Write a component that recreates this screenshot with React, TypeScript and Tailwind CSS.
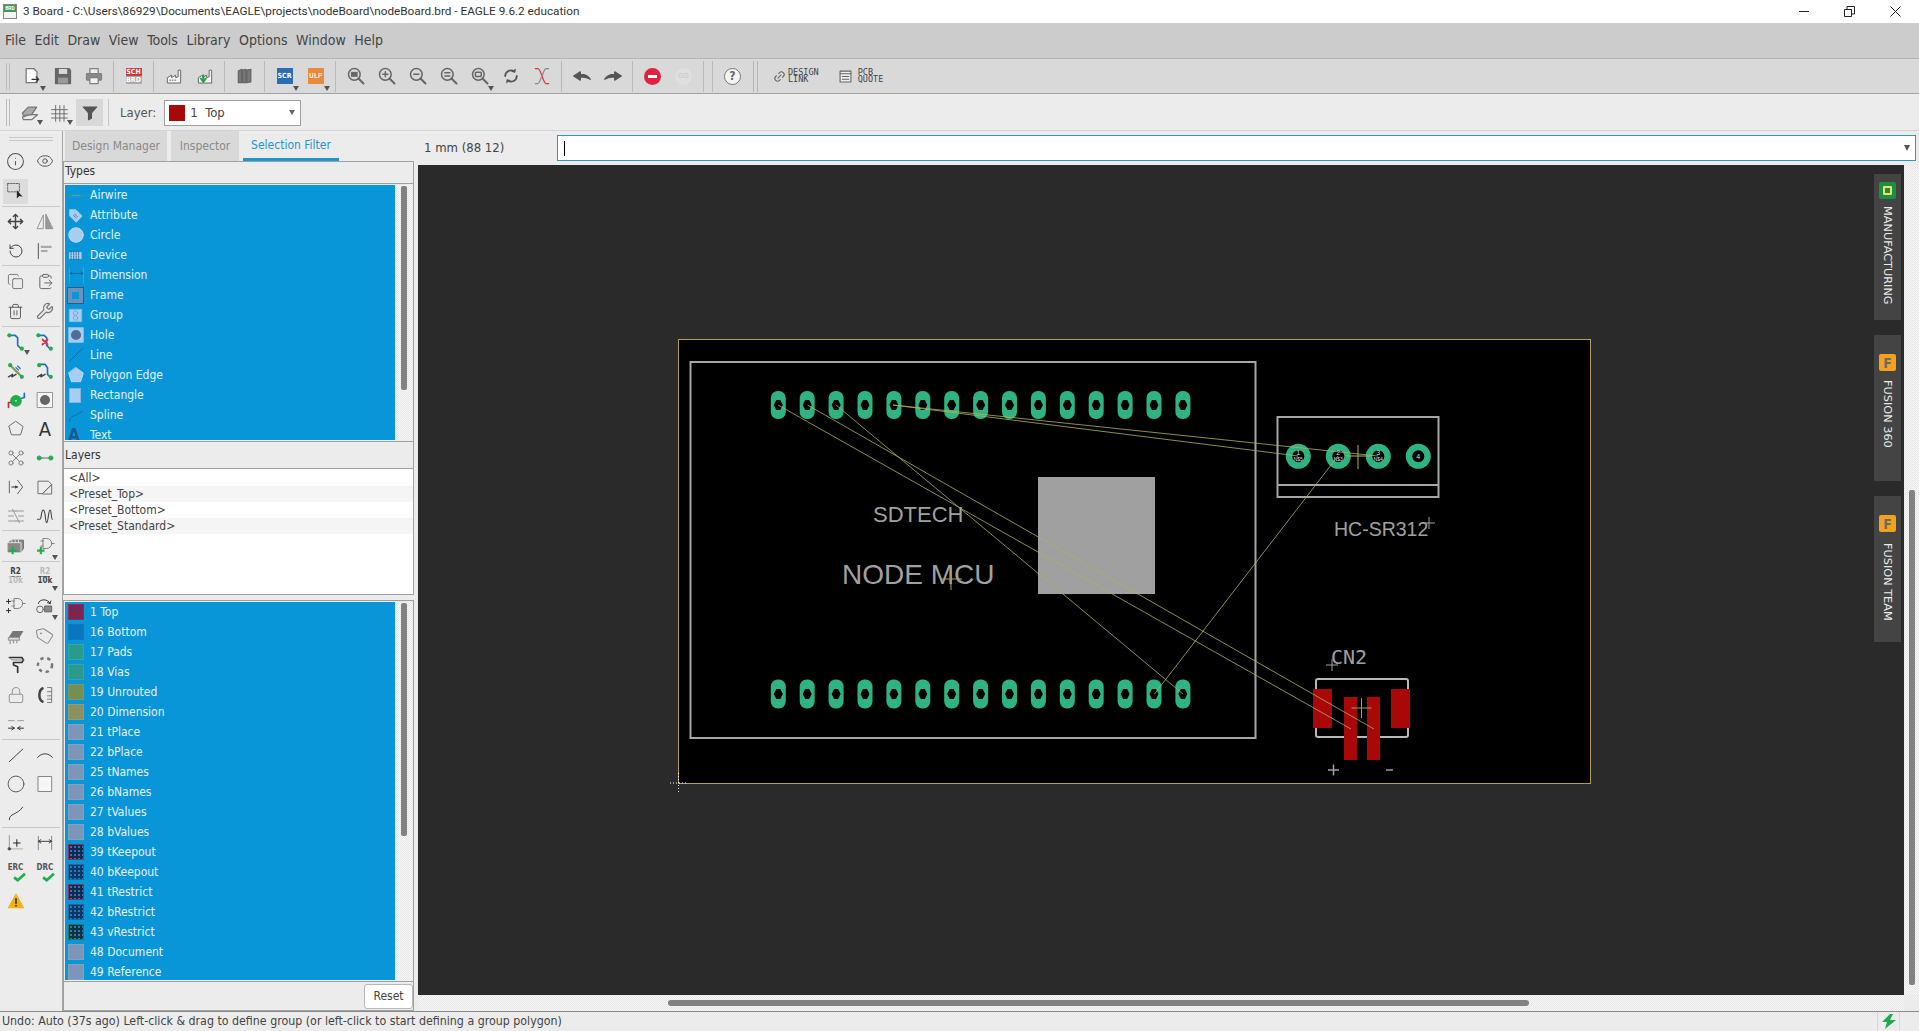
import React from "react";
import {
  ClipboardPaste,
  Copy,
  Eye,
  Info,
  Link2,
  Lock,
  Move,
  RotateCcw,
  Tag,
  Trash2,
  Wrench,
} from "lucide-react";

const TYPE_ROWS = [
  "Airwire",
  "Attribute",
  "Circle",
  "Device",
  "Dimension",
  "Frame",
  "Group",
  "Hole",
  "Line",
  "Polygon Edge",
  "Rectangle",
  "Spline",
  "Text",
];

const PRESETS = ["<All>", "<Preset_Top>", "<Preset_Bottom>", "<Preset_Standard>"];

const LAYER_ROWS = [
  { name: "1 Top", swatch: "bg-[#7a2650] border-[#8f2c58]" },
  { name: "16 Bottom", swatch: "bg-[#0a74bd] border-[#0a7cc6]" },
  { name: "17 Pads", swatch: "bg-[#2a9a8c] border-[#38a898]" },
  { name: "18 Vias", swatch: "bg-[#2a9a8c] border-[#38a898]" },
  { name: "19 Unrouted", swatch: "bg-[#748f52] border-[#7f9a5c]" },
  { name: "20 Dimension", swatch: "bg-[#8a9060] border-[#969c6c]" },
  { name: "21 tPlace", swatch: "bg-[#7b96b8] border-[#86a0c0]" },
  { name: "22 bPlace", swatch: "bg-[#7b96b8] border-[#86a0c0]" },
  { name: "25 tNames", swatch: "bg-[#7b96b8] border-[#86a0c0]" },
  { name: "26 bNames", swatch: "bg-[#7b96b8] border-[#86a0c0]" },
  { name: "27 tValues", swatch: "bg-[#7b96b8] border-[#86a0c0]" },
  { name: "28 bValues", swatch: "bg-[#7b96b8] border-[#86a0c0]" },
  { name: "39 tKeepout", swatch: "bg-[#0c2a52] border-[#8f2c58]", dotted: true },
  { name: "40 bKeepout", swatch: "bg-[#04376b] border-[#0a6cb0]", dotted: true },
  { name: "41 tRestrict", swatch: "bg-[#0c2a52] border-[#8f2c58]", dotted: true },
  { name: "42 bRestrict", swatch: "bg-[#04376b] border-[#0a6cb0]", dotted: true },
  { name: "43 vRestrict", swatch: "bg-[#0b3346] border-[#1f7a60]", dotted: true },
  { name: "48 Document", swatch: "bg-[#7b96b8] border-[#86a0c0]" },
  { name: "49 Reference", swatch: "bg-[#7b96b8] border-[#86a0c0]" },
];

const DITHER =
  "bg-[repeating-conic-gradient(#e6e6e6_0%_25%,#f8f8f8_0%_50%)] bg-[length:2px_2px]";

function Ic({
  children,
  size = 20,
  c = "#5a5a5a",
  w = 1.5,
}: {
  children: React.ReactNode;
  size?: number;
  c?: string;
  w?: number;
}) {
  return (
    <svg
      width={size}
      height={size}
      viewBox="0 0 24 24"
      fill="none"
      stroke={c}
      strokeWidth={w}
      strokeLinecap="round"
      strokeLinejoin="round"
    >
      {children}
    </svg>
  );
}

function Drop() {
  return (
    <span className="absolute right-[1px] bottom-[1px] h-0 w-0 border-x-[3.5px] border-t-[5px] border-x-transparent border-t-[#555]" />
  );
}

function Magnifier({ children }: { children?: React.ReactNode }) {
  return (
    <Ic c="#666" w={1.8}>
      <circle cx="10" cy="10" r="7" />
      <path d="M15 15l6 6" strokeWidth={2.4} />
      {children}
    </Ic>
  );
}

function ToolbarOne() {
  return (
    <div className="flex h-[35px] items-center border-b border-[#a2a2a2] bg-[#d9d9d9]">
      <Handle />
      <Tb drop>
        <Ic c="#777">
          <path d="M5 3h9l4 4v13H5z" fill="#fafafa" />
          <path d="M12 16h8m-3-3l3 3-3 3" stroke="#333" />
        </Ic>
      </Tb>
      <Tb>
        <Ic c="#666">
          <path d="M3 3h16l2 2v16H3z" fill="#666" />
          <rect x="7" y="3.5" width="10" height="6" fill="#d9d9d9" stroke="none" />
          <rect x="6" y="14" width="12" height="7" fill="#999" stroke="none" />
        </Ic>
      </Tb>
      <Tb>
        <Ic c="#808080">
          <rect x="7" y="3" width="10" height="6" fill="#eee" />
          <rect x="3" y="9" width="18" height="8" rx="1" fill="#8a8a8a" />
          <rect x="7" y="14" width="10" height="7" fill="#f2f2f2" />
        </Ic>
      </Tb>
      <TbSep />
      <Tb>
        <div className="flex h-[16px] w-[16px] flex-col text-center text-[7px] leading-[8px] font-bold text-white">
          <span className="bg-[#d03a3a]">SCH</span>
          <span className="bg-[#aaa]">BRD</span>
        </div>
      </Tb>
      <TbSep />
      <Tb>
        <Factory />
      </Tb>
      <Tb>
        <Factory arrow />
      </Tb>
      <TbSep />
      <Tb>
        <Ic c="#666">
          <path d="M4 6l4-2v16H4zM9 5l4-1v16H9zM14 5l5-1v15l-5 1z" fill="#777" />
        </Ic>
      </Tb>
      <TbSep />
      <Tb drop>
        <span className="flex h-[16px] w-[16px] items-center justify-center bg-[#2b6db5] text-[7px] font-bold text-white">
          SCR
        </span>
      </Tb>
      <Tb drop>
        <span className="flex h-[16px] w-[16px] items-center justify-center bg-[#e8893c] text-[7px] font-bold text-[#fde3c8]">
          ULP
        </span>
      </Tb>
      <TbSep />
      <Tb>
        <Magnifier>
          <rect x="6" y="7" width="8" height="6" fill="#666" stroke="none" />
        </Magnifier>
      </Tb>
      <Tb>
        <Magnifier>
          <path d="M7 10h6M10 7v6" />
        </Magnifier>
      </Tb>
      <Tb>
        <Magnifier>
          <path d="M7 10h6" />
        </Magnifier>
      </Tb>
      <Tb>
        <Magnifier>
          <path d="M7 8h6M7 12h6" />
        </Magnifier>
      </Tb>
      <Tb drop>
        <Magnifier>
          <rect x="6.5" y="7.5" width="7" height="5" rx="1" />
        </Magnifier>
      </Tb>
      <Tb>
        <Ic c="#555" w={2.2}>
          <path d="M5 12a7 7 0 0 1 11-5.5M19 12a7 7 0 0 1-11 5.5" />
          <path d="M18 3l-1 5-5-1zM6 21l1-5 5 1z" fill="#555" stroke="none" />
        </Ic>
      </Tb>
      <Tb>
        <Ic c="#d9363e" w={1.5}>
          <path d="M4 3h3c4 0 6 18 10 18h3" />
          <path d="M20 3h-3c-2 0-3 4-4.500 8M11 14c-1 3-2.500 7-4 7H4" stroke="#8a8a8a" />
        </Ic>
      </Tb>
      <TbSep />
      <Tb>
        <Ic c="#555">
          <path d="M2 12l8-5v3c5 0 9 1 12 6-4-2.500-8-3-12-2.500V17z" fill="#555" />
        </Ic>
      </Tb>
      <Tb>
        <Ic c="#555">
          <path d="M22 12l-8-5v3c-5 0-9 1-12 6 4-2.500 8-3 12-2.500V17z" fill="#555" />
        </Ic>
      </Tb>
      <TbSep />
      <Tb>
        <span className="flex h-[17px] w-[17px] items-center justify-center rounded-full bg-[#e0213f]">
          <span className="h-[3px] w-[9px] bg-white" />
        </span>
      </Tb>
      <Tb>
        <span className="flex h-[17px] w-[17px] items-center justify-center rounded-full bg-[#dfdfdf] text-[7px] font-bold text-[#cfcfcf]">
          GO
        </span>
      </Tb>
      <TbSep />
      <TbSep />
      <Tb>
        <span className="flex h-[17px] w-[17px] items-center justify-center rounded-full border border-[#777] bg-[#f4f4f4] text-[12px] font-bold text-[#666]">
          ?
        </span>
      </Tb>
      <span className="ml-[5px] h-[31px] w-px bg-[#b5b5b5]" />
      <span className="ml-[3px] h-[31px] w-px bg-[#b5b5b5]" />
      <span className="ml-[15px] flex items-center gap-[2px]">
        <Link2 size={13} color="#666" className="-rotate-45" />
        <LinkLabel top="DESIGN" bottom="LINK" />
      </span>
      <span className="ml-[20px] flex items-center gap-[6px]">
        <Ic size={13} c="#666" w={2}>
          <rect x="2" y="2" width="20" height="20" fill="#eee" />
          <path d="M2 7h20M6 12h12M6 17h12" />
        </Ic>
        <LinkLabel top="PCB" bottom="QUOTE" />
      </span>
    </div>
  );
}

function LinkLabel({ top, bottom }: { top: string; bottom: string }) {
  return (
    <span className="flex flex-col font-['DejaVu_Sans_Mono',monospace] text-[8.5px] leading-[7px] text-[#444]">
      <span>{top}</span>
      <span>{bottom}</span>
    </span>
  );
}

function Factory({ arrow }: { arrow?: boolean }) {
  return (
    <Ic c="#6a6a6a" w={1.2}>
      <path d="M4 20v-6l5-3v3l5-3v3l3-1V5h3v15z" fill="#f4f4f4" />
      {arrow ? (
        <path d="M10 11v6m-3-2l3 4 3-4" stroke="#22a84a" strokeWidth={2.4} />
      ) : (
        <path d="M7 17h1m2 0h1m2 0h1" />
      )}
    </Ic>
  );
}

function Handle() {
  return (
    <span className="flex w-[16px] justify-center gap-[2px]">
      <span className="h-[27px] w-px bg-[#bdbdbd]" />
      <span className="h-[27px] w-px bg-[#bdbdbd]" />
    </span>
  );
}

function Tb({ children, drop }: { children: React.ReactNode; drop?: boolean }) {
  return (
    <span className="relative flex h-[31px] w-[31px] items-center justify-center">
      {children}
      {drop ? <Drop /> : null}
    </span>
  );
}

function TbSep() {
  return (
    <span className="flex h-[31px] w-[9px] justify-center">
      <span className="h-full w-px bg-[#b9b9b9]" />
    </span>
  );
}

function ToolbarTwo() {
  return (
    <div className="flex h-[37px] items-center border-b border-[#d4d4d4] bg-[#ececec] pt-[1px]">
      <Handle />
      <span className="relative flex h-[27px] w-[28px] items-center justify-center">
        <Ic c="#777">
          <path d="M3 17l8-3 10 0-7 6H4z" fill="#ececec" />
          <path d="M3 12l7-7h10l-6 9-10 1z" fill="#aaa" />
        </Ic>
        <Drop />
      </span>
      <span className="relative flex h-[27px] w-[30px] items-center justify-center">
        <Ic c="#666" w={1.1}>
          <path d="M8 3v19M13 3v19M18 3v19M3 8h19M3 13h19M3 18h19" />
        </Ic>
        <Drop />
      </span>
      <span className="ml-[2px] flex h-[27px] w-[27px] items-center justify-center bg-[#d8d8d8]">
        <Ic size={18} c="#555">
          <path d="M3 4h18l-7 8v7l-4 2v-9z" fill="#555" />
        </Ic>
      </span>
      <span className="ml-[5px] h-[27px] w-px bg-[#c8c8c8]" />
      <span className="ml-[11px] text-[13px] text-[#555]">Layer:</span>
      <div className="ml-[8px] flex h-[26px] w-[137px] items-center border border-[#a0a0a0] bg-white pl-[4px]">
        <span className="h-[16px] w-[16px] bg-[#a80808]" />
        <span className="ml-[5px] text-[13px] whitespace-pre text-[#444]">1  Top</span>
        <span className="mr-[5px] ml-auto h-0 w-0 border-x-[3.500px] border-t-[5px] border-x-transparent border-t-[#666]" />
      </div>
    </div>
  );
}

const TOOL_SECTIONS: { rows: string; items: React.ReactNode[] }[] = [
  {
    rows: "auto-rows-[30px]",
    items: [
      <Info key="a" size={19} color="#555" strokeWidth={1.3} />,
      <Eye key="b" size={18} color="#555" strokeWidth={1.3} />,
      <span key="c" className="flex h-[25px] w-[25px] items-center justify-center bg-[#dcdcdc]">
        <Ic size={20} c="#666" w={1.2}>
          <rect x="2" y="3" width="14" height="10" strokeDasharray="2 1.500" />
          <path d="M13 11l0 10 3-3 4 1z" fill="#222" stroke="none" />
        </Ic>
      </span>,
      <span key="d" />,
    ],
  },
  {
    rows: "auto-rows-[29px]",
    items: [
      <Move key="a" size={17} color="#444" strokeWidth={2} />,
      <Ic key="b" c="#888" w={1}>
        <path d="M10 4v16H3z" />
        <path d="M13 3v17h8z" fill="#999" />
      </Ic>,
      <RotateCcw key="c" size={16} color="#444" strokeWidth={1.5} />,
      <Ic key="d" c="#555" w={1.2}>
        <path d="M4 3v18" />
        <path d="M7 7h13M7 12h8" stroke="#aaa" strokeWidth={2.5} strokeLinecap="butt" />
      </Ic>,
    ],
  },
  {
    rows: "auto-rows-[30px]",
    items: [
      <Copy key="a" size={17} color="#666" strokeWidth={1.2} />,
      <ClipboardPaste key="b" size={17} color="#666" strokeWidth={1.4} />,
      <Trash2 key="c" size={17} color="#555" strokeWidth={1.3} />,
      <Wrench key="d" size={18} color="#777" strokeWidth={1.6} />,
    ],
  },
  {
    rows: "auto-rows-[29px]",
    items: [
      <RouteIcon key="a" drop />,
      <RouteIcon key="b" cross />,
      <SwapIcon key="c" first />,
      <SwapIcon key="d" />,
      <Ic key="e" c="#1fae4b" w={2}>
        <circle cx="12" cy="13" r="6" fill="#1fae4b" />
        <circle cx="12" cy="13" r="1" fill="#fff" stroke="none" />
        <path d="M3 21v-6h3" stroke="#c62b2b" />
        <path d="M22 4v5l-3 1" stroke="#1e6fc8" />
      </Ic>,
      <Ic key="f" c="#888" w={1}>
        <rect x="3" y="3" width="18" height="18" fill="#f4f4f4" />
        <circle cx="12" cy="12" r="6" fill="#666" stroke="none" />
      </Ic>,
      <Ic key="g" c="#666" w={1.1}>
        <path d="M12 3l8.500 6-3 10h-11l-3-10z" />
      </Ic>,
      <span key="h" className="text-[20px] leading-none text-[#333]">
        A
      </span>,
      <Ic key="i" c="#777" w={1.1}>
        <path d="M7 7l10 10M17 7L7 17" />
        <circle cx="6" cy="6" r="2.500" fill="#ececec" />
        <circle cx="18" cy="6" r="2.500" fill="#ececec" />
        <circle cx="6" cy="18" r="2.500" fill="#ececec" />
        <circle cx="18" cy="18" r="2.500" fill="#ececec" />
      </Ic>,
      <Ic key="j" c="#1fae4b" w={1.1}>
        <path d="M6 12h12" stroke="#555" />
        <circle cx="5" cy="12" r="2.500" fill="#1fae4b" />
        <circle cx="19" cy="12" r="2.500" fill="#1fae4b" />
      </Ic>,
      <Ic key="k" c="#666" w={1.2}>
        <path d="M4 5v14M14 4l6 8-6 8" />
        <path d="M7 12h7" stroke="#333" />
        <path d="M11 10l3 2-3 2z" fill="#333" stroke="none" />
      </Ic>,
      <Ic key="l" c="#666" w={1.1}>
        <path d="M4 5h12l4 4v0L9 20H4zM9 20L20 9v11z" />
      </Ic>,
      <Ic key="m" c="#888" w={1}>
        <path d="M3 6h9M3 12h6M3 18h9M12 6h9M15 12h6M12 18h9M8 4l8 16" />
      </Ic>,
      <Ic key="n" c="#444" w={1.3}>
        <path d="M3 16h3c2 0 1-11 4-11s2 15 4 15 2-15 4-15 1 11 3 11" />
      </Ic>,
    ],
  },
  {
    rows: "auto-rows-[30px]",
    items: [
      <Ic key="a" c="#666" w={1}>
        <path d="M3 8l4-3h14v10l-3 4H3z" fill="#888" />
        <path d="M7 5v3M11 5v3M15 5v3M3 8h15v11" stroke="#ececec" />
        <path d="M8 13v9M3.500 17.500h9" stroke="#1fae4b" strokeWidth={2.5} strokeLinecap="butt" />
      </Ic>,
      <GateIcon key="b" green drop />,
    ],
  },
  {
    rows: "auto-rows-[29.5px]",
    items: [
      <ValueLabel key="a" dimValue />,
      <span key="b" className="relative flex h-full w-full items-center justify-center">
        <ValueLabel />
        <Drop />
      </span>,
      <GateIcon key="c" />,
      <span key="d" className="relative flex h-full w-full items-center justify-center">
        <Ic c="#666" w={1.2}>
          <circle cx="6" cy="16" r="4" />
          <rect x="12" y="12" width="8" height="7" fill="#888" />
          <path d="M4 9c1-6 12-6 14 0m0 0l-3-1m3 1l1-3" stroke="#333" />
        </Ic>
        <Drop />
      </span>,
      <Ic key="e" c="#999">
        <path d="M3 14l5-8h13l-5 8z" fill="#777" stroke="none" />
        <path d="M3 14h13v3H3zM5 18v3M9 18v2M13 18v2" />
      </Ic>,
      <Tag key="f" size={18} color="#888" strokeWidth={1.3} className="-rotate-12" />,
      <Ic key="g" c="#333" w={2}>
        <path d="M4 3h15l2 3-2 3H9v3l5 2v7" />
        <path d="M4 3l3 3h14" stroke="#777" strokeWidth={1} />
      </Ic>,
      <Ic key="h" c="#777" w={3}>
        <circle cx="12" cy="12" r="8.500" strokeDasharray="4 4.500" strokeLinecap="butt" />
      </Ic>,
      <Lock key="i" size={18} color="#999" strokeWidth={1.4} />,
      <Ic key="j" c="#444" w={1.1}>
        <path d="M9 4c-5 3-5 13 0 16" strokeWidth={3} />
        <path d="M15 3h5v18h-5M15 8h5M15 13h5M15 17h5" stroke="#777" />
      </Ic>,
      <Ic key="k" c="#333" w={1.2}>
        <path d="M3 8h7M14 8h7" stroke="#999" />
        <path d="M3 17h7m-3-2l3 2-3 2M21 17h-7m3-2l-3 2 3 2" />
      </Ic>,
      <span key="l" />,
    ],
  },
  {
    rows: "auto-rows-[29px]",
    items: [
      <Ic key="a" c="#333" w={1.1}>
        <path d="M4 20L20 5" />
      </Ic>,
      <Ic key="b" c="#333" w={1.1}>
        <path d="M3 15c5-6 13-6 18 0" />
      </Ic>,
      <Ic key="c" c="#444" w={1}>
        <circle cx="12" cy="12" r="9.500" />
      </Ic>,
      <Ic key="d" c="#888" w={1.2}>
        <rect x="4" y="3" width="16" height="18" fill="#f6f6f6" />
      </Ic>,
      <Ic key="e" c="#333" w={1.1}>
        <path d="M4 20c0-8 9-5 16-15" />
      </Ic>,
      <span key="f" />,
    ],
  },
  {
    rows: "auto-rows-[29px]",
    items: [
      <Ic key="a" c="#555" w={1.2}>
        <path d="M4 3v16" stroke="#999" />
        <path d="M4 19h16" stroke="#bbb" strokeWidth={1.6} />
        <circle cx="4" cy="19" r="1.500" fill="#444" />
        <path d="M9 12h8M13 8v8" stroke="#222" />
      </Ic>,
      <Ic key="b" c="#444" w={1.2}>
        <path d="M4 4v16M20 4v16" stroke="#888" />
        <path d="M4 10h16m-13-2l-3 2 3 2m10-4l3 2-3 2" />
      </Ic>,
      <CheckLabel key="c" label="ERC" />,
      <CheckLabel key="d" label="DRC" />,
      <Ic key="e" c="#f2b211" size={18}>
        <path d="M12 3l10 18H2z" fill="#f2b211" />
        <path d="M12 9v6M12 18v.5" stroke="#222" strokeWidth={2} />
      </Ic>,
      <span key="f" />,
    ],
  },
];

function RouteIcon({ drop, cross }: { drop?: boolean; cross?: boolean }) {
  return (
    <span className="relative flex h-full w-full items-center justify-center">
      <Ic c="#1e6fc8" w={2}>
        <path d="M4 4h7l3 3v9l5 5" />
        <circle cx="4" cy="4" r="2.500" fill="#1fae4b" stroke="none" />
        <circle cx="19" cy="20" r="2.500" fill="#1fae4b" stroke="none" />
        {cross ? <path d="M9 9l6 6M15 9l-6 6" stroke="#d9363e" strokeWidth={2.2} /> : null}
      </Ic>
      {drop ? <Drop /> : null}
    </span>
  );
}

function SwapIcon({ first }: { first?: boolean }) {
  return (
    <Ic c="#1e6fc8" w={2}>
      {first ? (
        <path d="M5 5l14 14" stroke="#7d9a5a" strokeWidth={2.5} />
      ) : (
        <path d="M5 4h7l3 4v8l4 4" />
      )}
      <circle cx="5" cy="5" r="2.500" fill="#1fae4b" stroke="none" />
      <circle cx="19" cy="19" r="2.500" fill="#1fae4b" stroke="none" />
      <path d="M3 19l5-3-1 3 5-3" stroke="#444" strokeWidth={1.7} />
      {first ? <path d="M12 8l3 3m-1-5l3 3" stroke="#1e6fc8" strokeWidth={1.5} /> : null}
    </Ic>
  );
}

function GateIcon({ green, drop }: { green?: boolean; drop?: boolean }) {
  return (
    <span className="relative flex h-full w-full items-center justify-center">
      <Ic c="#777" w={1.1}>
        <path d="M10 3h4a6 6 0 0 1 0 12h-4zM20 9h3M7 6h3M7 12h3" />
        {green ? (
          <path d="M7 13v9M2.500 17.500h9" stroke="#1fae4b" strokeWidth={2.5} strokeLinecap="butt" />
        ) : (
          <path d="M3 4v5M.5 6.500h5M3 15v5M.5 17.500h5" stroke="#222" />
        )}
      </Ic>
      {drop ? <Drop /> : null}
    </span>
  );
}

function ValueLabel({ dimValue }: { dimValue?: boolean }) {
  return (
    <span className="flex flex-col items-center text-[8px] leading-[8px] font-bold">
      <span className={`border-b border-[#777] ${dimValue ? "text-[#444]" : "text-[#bbb]"}`}>R2</span>
      <span className={dimValue ? "text-[#bbb]" : "text-[#444]"}>10k</span>
    </span>
  );
}

function CheckLabel({ label }: { label: string }) {
  return (
    <span className="relative flex h-[20px] w-[24px] justify-center pt-[1px] text-[8px] leading-[10px] font-bold text-[#555]">
      {label}
      <svg className="absolute right-[2px] bottom-0" width="13" height="10" viewBox="0 0 14 11">
        <path d="M1 6l4 3 8-7" fill="none" stroke="#1fae4b" strokeWidth="3" />
      </svg>
    </span>
  );
}

function ToolColumn() {
  return (
    <div className="flex w-[63px] shrink-0 flex-col border-r border-[#a6a6a6] bg-[#ececec]">
      <div className="flex h-[15px] flex-col items-center justify-center gap-[2px]">
        <span className="h-px w-[44px] bg-[#c8c8c8]" />
        <span className="h-px w-[44px] bg-[#c8c8c8]" />
      </div>
      {TOOL_SECTIONS.map((section, index) => (
        <React.Fragment key={index}>
          <div className={`grid grid-cols-[31px_28px] ${section.rows}`}>
            {section.items.map((item, itemIndex) => (
              <span key={itemIndex} className="flex items-center justify-center">
                {item}
              </span>
            ))}
          </div>
          {index < TOOL_SECTIONS.length - 1 ? (
            <span className="mx-[2px] h-px w-[58px] bg-[#c9c9c9]" />
          ) : null}
        </React.Fragment>
      ))}
    </div>
  );
}

function TypeIcon({ name }: { name: string }) {
  const light = "#a9cdee";
  const dark = "#1f5f96";
  switch (name) {
    case "Airwire":
      return (
        <Ic size={17} c="#22a868" w={2}>
          <path d="M1 12h5M18 12h5" />
          <path d="M7 12h10" stroke="#5a9ab8" />
        </Ic>
      );
    case "Attribute":
      return (
        <Ic size={15} c={light} w={2}>
          <path d="M3 3h9l10 10-9 9L3 12z" fill={light} />
          <path d="M9 12l4 4m-2-6l4 4" stroke={dark} strokeWidth={1.2} />
        </Ic>
      );
    case "Circle":
      return (
        <Ic size={16} c="#dcecf8" w={1}>
          <circle cx="12" cy="12" r="11" fill={light} />
        </Ic>
      );
    case "Device":
      return (
        <Ic size={15} c={light} w={1.4}>
          <rect x="3" y="7" width="18" height="10" fill={light} />
          <path d="M5 5v14M9 5v14M13 5v14M17 5v14" strokeDasharray="2 2" stroke={dark} />
        </Ic>
      );
    case "Dimension":
      return (
        <Ic size={17} c={dark} w={1.2}>
          <path d="M2 1v22M22 1v22" stroke="#5d9cc8" />
          <path d="M3 9h18m-3-2l3 2-3 2M6 7L3 9l3 2" />
        </Ic>
      );
    case "Frame":
      return (
        <span className="h-[15px] w-[15px] border-[4px] border-[#6f90b8] outline-1 outline-[#1f5f96]" />
      );
    case "Group":
      return (
        <Ic size={15} c="#7fb5e0" w={1.3}>
          <rect x="2" y="2" width="20" height="20" fill={light} strokeDasharray="2 2" />
          <circle cx="12" cy="8" r="3.500" stroke="#6ca6d8" />
          <circle cx="12" cy="16" r="3.500" stroke="#6ca6d8" />
        </Ic>
      );
    case "Hole":
      return (
        <Ic size={16} c={light} w={1}>
          <rect x="1" y="1" width="22" height="22" fill={light} />
          <circle cx="12" cy="12" r="7.500" fill="#4a6f99" stroke="none" />
        </Ic>
      );
    case "Line":
      return (
        <Ic size={16} c={dark} w={1.2}>
          <path d="M2 22L22 2" />
        </Ic>
      );
    case "Polygon Edge":
      return (
        <Ic size={16} c="#dcecf8" w={1}>
          <path d="M12 1l11 8-4 13H5L1 9z" fill={light} />
        </Ic>
      );
    case "Rectangle":
      return <span className="ml-[1px] h-[15px] w-[12px] border border-[#7fb5e0] bg-[#a9cdee]" />;
    case "Spline":
      return (
        <Ic size={16} c={dark} w={1.2}>
          <path d="M2 22c0-10 9-7 20-16" />
        </Ic>
      );
    default:
      return <span className="text-[17px] leading-none font-bold text-[#1b5a90]">A</span>;
  }
}

function Scroll({ thumb }: { thumb: string }) {
  return (
    <div className={`flex w-[17px] shrink-0 justify-center ${DITHER}`}>
      <span className={`w-[6px] rounded-[2px] bg-[#828282] ${thumb}`} />
    </div>
  );
}

function SelectionFilter() {
  return (
    <div className="flex w-[355px] shrink-0 flex-col bg-[#ececec] pr-[4px] text-[12px]">
      <div className="flex h-[30px] items-end gap-[4px] pl-[2px] text-[#8a8a8a]">
        <span className="flex h-[30px] w-[102px] items-center justify-center bg-[#d9d9d9] text-[12px]">
          Design Manager
        </span>
        <span className="flex h-[30px] w-[68px] items-center justify-center bg-[#d9d9d9] text-[12px]">
          Inspector
        </span>
        <span className="flex h-[30px] w-[96px] items-center justify-center border-b-[3px] border-[#1c96cc] text-[12px] text-[#1c96cc]">
          Selection Filter
        </span>
      </div>
      <div className="flex h-[22px] items-center border-t border-r border-l border-[#a0a0a0] pb-[4px] text-[#333]">
        <span className="pl-[1px]">Types</span>
      </div>
      <div className="flex h-[259px] border border-[#a0a0a0] p-[1px] pr-0">
        <div className="h-full w-[330px] overflow-hidden bg-[#0996d9] pl-[3px]">
          {TYPE_ROWS.map((name) => (
            <div key={name} className="flex h-[20px] items-center text-[#e6f3fb]">
              <span className="flex w-[22px] justify-start">
                <TypeIcon name={name} />
              </span>
              <span>{name}</span>
            </div>
          ))}
        </div>
        <Scroll thumb="mt-[1px] h-[204px]" />
      </div>
      <div className="flex h-[26px] items-center border-x border-[#a0a0a0] text-[#333]">
        <span className="pl-[1px]">Layers</span>
      </div>
      <div className="h-[127px] border border-[#a0a0a0] bg-white pt-[1px]">
        {PRESETS.map((preset, index) => (
          <div
            key={preset}
            className={`flex h-[16px] items-center pl-[5px] text-[#444] ${index % 2 === 1 ? "bg-[#f5f5f5]" : ""}`}
          >
            {preset}
          </div>
        ))}
      </div>
      <div className="mt-[5px] flex h-[382px] border border-[#a0a0a0] p-[1px] pr-0">
        <div className="h-full w-[330px] overflow-hidden bg-[#0996d9] pl-[3px]">
          {LAYER_ROWS.map((layer) => (
            <div key={layer.name} className="flex h-[20px] items-center text-[#e6f3fb]">
              <span className="flex w-[22px] justify-start">
                <span
                  className={`h-[16px] w-[16px] border ${layer.swatch} ${
                    layer.dotted
                      ? "bg-[radial-gradient(#3f78a8_0.7px,transparent_0.8px)] bg-[length:4px_4px]"
                      : ""
                  }`}
                />
              </span>
              <span>{layer.name}</span>
            </div>
          ))}
        </div>
        <Scroll thumb="mt-[1px] h-[233px]" />
      </div>
      <div className="flex flex-1 items-center justify-end border-x border-b border-[#a0a0a0]">
        <span className="flex h-[25px] w-[49px] items-center justify-center rounded-[3px] border border-[#b8b8b8] bg-white text-[#444]">
          Reset
        </span>
      </div>
    </div>
  );
}

const PAD_X = Array.from({ length: 15 }, (_, i) => 778.3 + i * 28.9);

function SlotPad({ x, y, h }: { x: number; y: number; h: number }) {
  return (
    <g>
      <rect x={x - 7.5} y={y - h / 2} width="15" height={h} rx="7" fill="#2fb380" />
      <path d={`M${x - 2} ${y - 5}h4l2.500 5-2.500 5h-4l-2.500-5z`} fill="#000" />
    </g>
  );
}

function Cross({ x, y, r, c }: { x: number; y: number; r: number; c: string }) {
  return <path d={`M${x - r} ${y}h${r * 2}M${x} ${y - r}v${r * 2}`} stroke={c} strokeWidth="1" fill="none" />;
}

function Board() {
  const wires = [
    [778, 405, 1351, 729],
    [807.5, 405, 1374, 729],
    [836, 405, 1183, 694],
    [1154.5, 694, 1338, 456],
    [893, 405, 1298, 456],
    [893, 405, 1378, 456],
  ];
  return (
    <svg className="h-full w-full" viewBox="418 165 1486 830">
      <rect x="678.500" y="339.500" width="912" height="444" fill="#000" stroke="#b29a5c" />
      <rect x="690.500" y="362" width="565" height="376" fill="none" stroke="#a6a6a6" strokeWidth="2" />
      {PAD_X.map((x) => (
        <SlotPad key={`t${x}`} x={x} y={405} h={28} />
      ))}
      {PAD_X.map((x) => (
        <SlotPad key={`b${x}`} x={x} y={694} h={29} />
      ))}
      <rect x="1038" y="477" width="117" height="117" fill="#a0a0a0" />

      <rect x="1277.500" y="417" width="161" height="80" fill="none" stroke="#a6a6a6" strokeWidth="2" />
      <path d="M1277 485h162" stroke="#a6a6a6" strokeWidth="2" />
      {[1298.3, 1338.3, 1378.3, 1418.3].map((x, i) => (
        <g key={x}>
          <circle cx={x} cy="456.300" r="12.500" fill="#2fb380" />
          <circle cx={x} cy="456.300" r="6" fill="#000" />
          <text x={x} y={i === 3 ? 459 : 455} fontSize="7" textAnchor="middle" fill="#ddd" fontFamily="Liberation Sans, sans-serif">
            {i + 1}
          </text>
          {i < 3 ? (
            <text x={x} y="461" fontSize="5" textAnchor="middle" fill="#ddd" fontFamily="Liberation Sans, sans-serif">
              {["N$5", "N$3", "N$4"][i]}
            </text>
          ) : null}
        </g>
      ))}

      <rect x="1316" y="679" width="92" height="58" rx="2" fill="none" stroke="#b8b8b8" strokeWidth="2" />
      <rect x="1313" y="689" width="19" height="39" fill="#a80808" />
      <rect x="1391" y="689" width="19" height="39" fill="#a80808" />
      <rect x="1344" y="697" width="13" height="63" fill="#a80808" />
      <rect x="1367" y="697" width="13" height="63" fill="#a80808" />

      <g fill="#a0a0a0" fontFamily="Liberation Sans, sans-serif">
        <text x="873" y="522" fontSize="22">SDTECH</text>
        <text x="842" y="584" fontSize="28">NODE MCU</text>
        <text x="1334" y="536" fontSize="19.500">HC-SR312</text>
      </g>
      <text x="1331" y="664" fontSize="20" fill="#a0a0a0" fontFamily="DejaVu Sans Mono, monospace">CN2</text>
      <path d="M1328 770h11M1333.500 764.500v11M1386 770h7" stroke="#a0a0a0" strokeWidth="1.500" />

      {wires.map(([x1, y1, x2, y2], i) => (
        <line key={i} x1={x1} y1={y1} x2={x2} y2={y2} stroke="#b0b060" strokeWidth="0.800" />
      ))}
      <path d="M1358 445v24M1346 456h24" stroke="#b0b060" strokeWidth="1" />
      <Cross x={951} y={579} r={11} c="#a3a35a" />
      <Cross x={1361.500} y={708} r={10} c="#a3a35a" />
      <Cross x={1429} y={523} r={6} c="#a0a0a0" />
      <Cross x={1332} y={665} r={6} c="#a0a0a0" />
      <path d="M670 783h18M678.500 773v20" stroke="#fff" strokeWidth="1" strokeDasharray="1 2" />
    </svg>
  );
}

function SideTab({
  label,
  icon,
  iconClass,
  textClass,
}: {
  label: string;
  icon: React.ReactNode;
  iconClass: string;
  textClass: string;
}) {
  return (
    <div className="flex h-[146px] w-[27px] flex-col items-center bg-[#444]">
      <div className={`flex h-[17px] w-[17px] items-center justify-center ${iconClass}`}>{icon}</div>
      <span
        className={`font-['DejaVu_Sans',sans-serif] text-[11.3px] leading-none text-[#ececec] [writing-mode:vertical-rl] ${textClass}`}
      >
        {label}
      </span>
    </div>
  );
}

function OrangeF() {
  return (
    <span className="flex h-[17px] w-[17px] items-center justify-center rounded-[2px] bg-[#f4a11e] text-[14px] leading-none font-bold text-[#6a6a6a]">
      F
    </span>
  );
}

function SideTabs() {
  return (
    <div className="absolute top-[9px] right-[3px] flex flex-col gap-[15px]">
      <SideTab
        label="MANUFACTURING"
        iconClass="mt-[8px]"
        textClass="mt-[7px]"
        icon={
          <span className="flex h-[17px] w-[17px] items-center justify-center rounded-[2px] bg-[#1f8f3f]">
            <span className="h-[9px] w-[9px] rounded-[1px] border-2 border-[#e8e36a]" />
          </span>
        }
      />
      <SideTab label="FUSION 360" iconClass="mt-[19px]" textClass="mt-[9px]" icon={<OrangeF />} />
      <SideTab label="FUSION TEAM" iconClass="mt-[19px]" textClass="mt-[11px]" icon={<OrangeF />} />
    </div>
  );
}

function Workspace() {
  return (
    <div className="flex min-w-0 flex-none flex-col bg-[#ececec]">
      <div className="flex h-[34px] w-[1501px] items-center">
        <span className="w-[139px] pl-[6px] text-[13px] text-[#444]">1 mm (88 12)</span>
        <div className="flex h-[26px] w-[1359px] items-center border border-[#2a9ab8] bg-white pl-[6px]">
          <span className="h-[15px] w-px bg-black" />
          <span className="mr-[5px] ml-auto h-0 w-0 border-x-[3.500px] border-t-[6px] border-x-transparent border-t-[#555]" />
        </div>
      </div>
      <div className="flex">
        <div className="relative h-[830px] w-[1486px] bg-[#2a2a2a]">
          <Board />
          <SideTabs />
        </div>
        <div className={`flex h-[830px] w-[15px] justify-center pt-[325px] ${DITHER}`}>
          <span className="ml-[1px] h-[495px] w-[6px] rounded-[2px] bg-[#828282]" />
        </div>
      </div>
      <div className="flex h-[16px]">
        <div className={`flex w-[1486px] items-center pl-[250px] ${DITHER}`}>
          <span className="h-[6px] w-[861px] rounded-[3px] bg-[#828282]" />
        </div>
      </div>
    </div>
  );
}

export default function App() {
  return (
    <div className="flex h-[1031px] w-[1919px] flex-col overflow-hidden bg-[#ececec] font-['DejaVu_Sans_Condensed','Liberation_Sans',sans-serif]">
      <div className="flex h-[23px] items-center bg-white font-['Roboto',sans-serif] text-[11.75px] text-[#333]">
        <span className="mr-[6px] ml-[3px] flex h-[15px] w-[14px] flex-col items-center border border-[#888] bg-[#f4f4f4]">
          <span className="w-full bg-[#3a9a5a] text-center text-[5px] leading-[7px] font-bold text-white">BRD</span>
        </span>
        <span>3 Board - C:\Users\86929\Documents\EAGLE\projects\nodeBoard\nodeBoard.brd - EAGLE 9.6.2 education</span>
        <div className="ml-auto flex items-center gap-[35px] pr-[18px]">
          <span className="h-px w-[10px] bg-[#222]" />
          <svg width="11" height="11" viewBox="0 0 11 11" fill="none" stroke="#222">
            <path d="M.5 3.500h7v7h-7zM3 3.500V.5h7.500V8H7.500" />
          </svg>
          <svg width="11" height="11" viewBox="0 0 11 11" fill="none" stroke="#222">
            <path d="M.5.5l10 10M10.500.5l-10 10" />
          </svg>
        </div>
      </div>
      <div className="flex h-[36px] items-center gap-[8.5px] border-b border-[#b4b4b4] bg-[#cccccc] pl-[5px] text-[14px] text-[#444]">
        {["File", "Edit", "Draw", "View", "Tools", "Library", "Options", "Window", "Help"].map((item) => (
          <span key={item}>{item}</span>
        ))}
      </div>
      <ToolbarOne />
      <ToolbarTwo />
      <div className="flex h-[880px]">
        <ToolColumn />
        <SelectionFilter />
        <Workspace />
      </div>
      <div className="flex h-[20px] items-center border-t border-[#8a8a8a] pl-[2px] text-[12.3px] text-[#444]">
        <span>Undo: Auto (37s ago) Left-click &amp; drag to define group (or left-click to start defining a group polygon)</span>
        <span className="mr-[19px] ml-auto flex h-full w-[23px] items-center justify-center border-x border-[#d8d8d8]">
          <svg width="16" height="15" viewBox="0 0 16 15">
            <path d="M9 0L1 8h5l-2 7 11-9H9l3-6z" fill="#1faa4f" />
          </svg>
        </span>
      </div>
    </div>
  );
}
